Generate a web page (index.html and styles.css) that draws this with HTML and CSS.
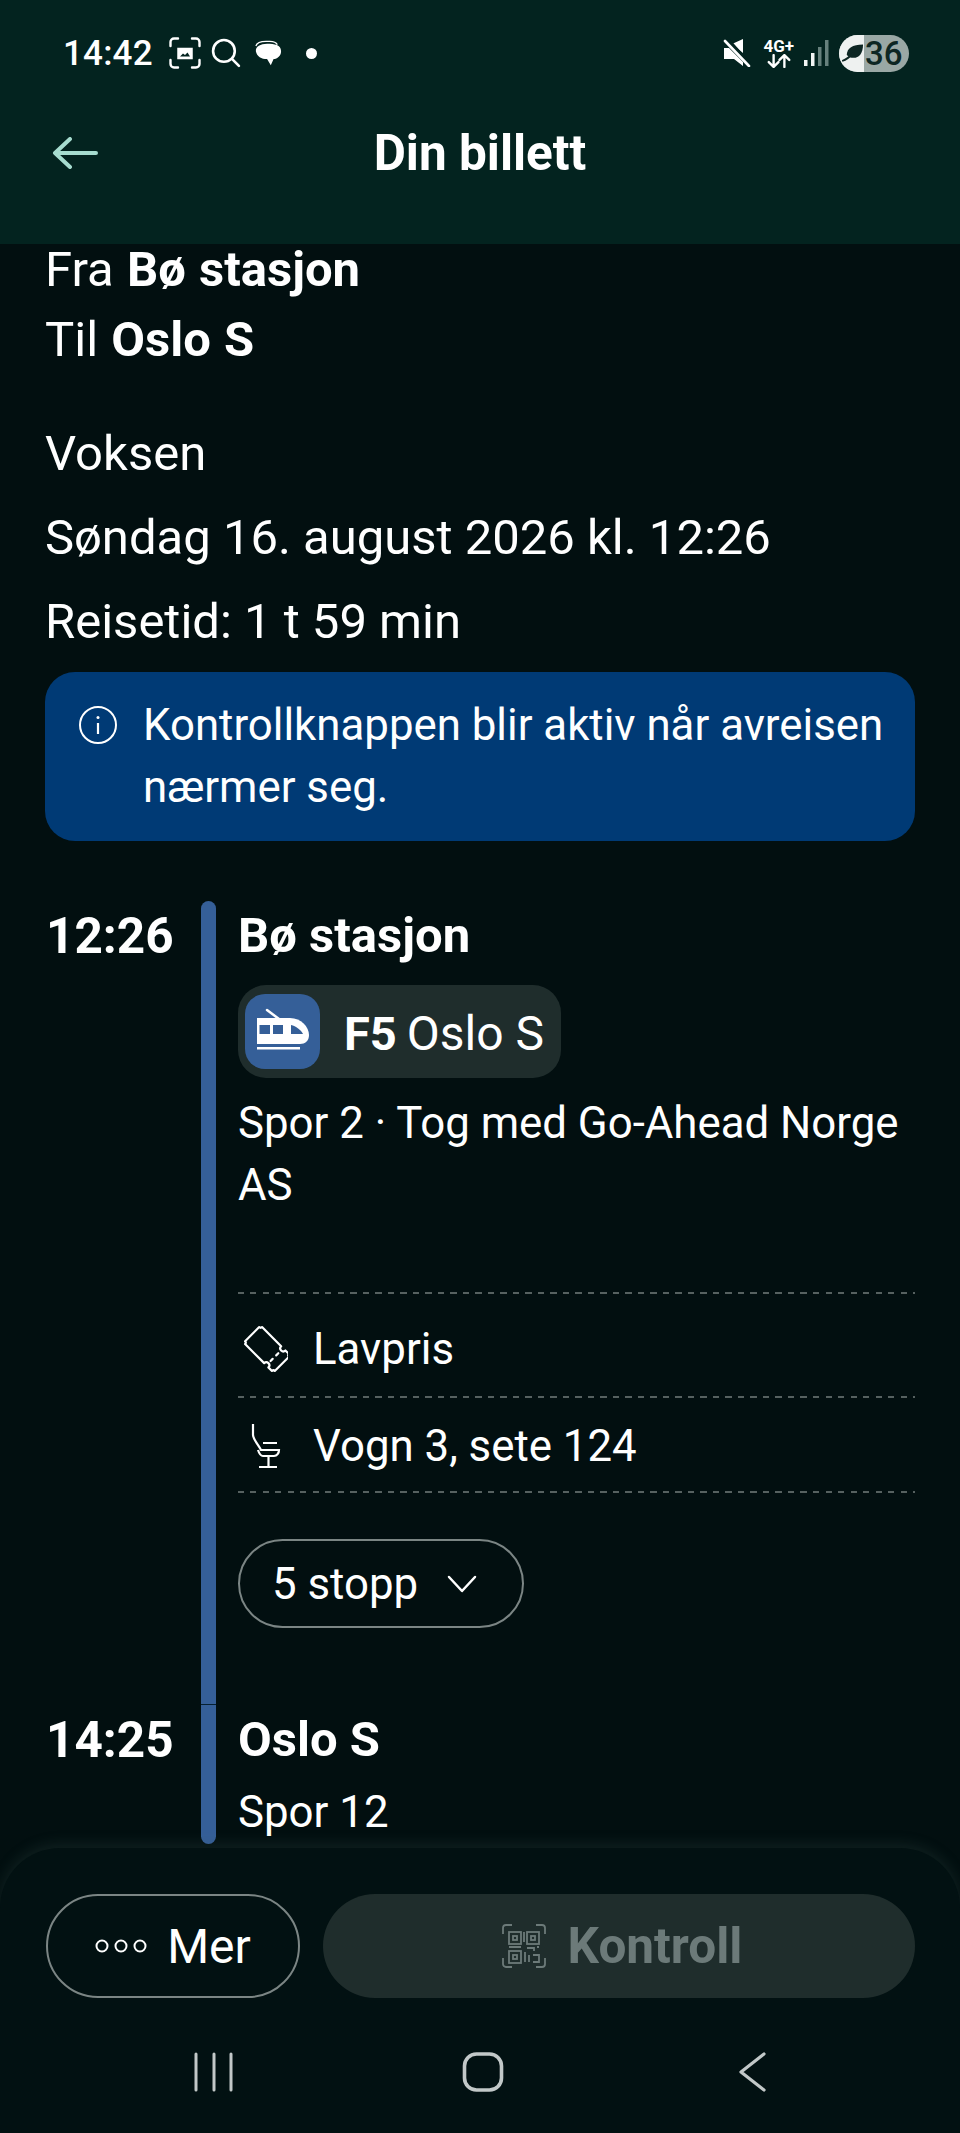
FILE: index.html
```html
<!DOCTYPE html>
<html lang="en">
<head>
    <meta charset="UTF-8">
    <meta name="viewport" content="width=device-width, initial-scale=1.0">
    <title>Din billett</title>
    <link rel="stylesheet" href="styles.css">
</head>
<body>
    <div class="app">
        <header class="top">
            <div class="status-bar">
                <div class="status-left">
                    <span class="clock">14:42</span>
                    <svg class="ico-shot" width="32" height="32" viewBox="0 0 32 32" fill="none" stroke="currentColor" stroke-width="2.400" stroke-linecap="round">
                        <path d="M1.500 9V5a3.500 3.500 0 0 1 3.500-3.500h4M23 1.500h4A3.500 3.500 0 0 1 30.500 5v4M30.500 23v4a3.500 3.500 0 0 1-3.500 3.500h-4M9 30.500H5A3.500 3.500 0 0 1 1.500 27v-4"/>
                        <path d="M9 11.500h14v10H9z" fill="currentColor" stroke-width="1.500"/>
                        <path d="M11 19.500l3-3 2 1.500 2.500-2.500 2.500 4z" fill="#03231f" stroke="none"/>
                    </svg>
                    <svg class="ico-search" width="30" height="30" viewBox="0 0 29 29" fill="none" stroke="currentColor" stroke-width="2.500" stroke-linecap="round">
                        <circle cx="12.500" cy="12.500" r="10.500"/>
                        <path d="M20.500 20.500l6.500 6.500"/>
                    </svg>
                    <svg class="ico-chat" width="28" height="27" viewBox="0 0 30 28" fill="currentColor">
                        <path d="M2 6C3 2.500 7 1 13 1h4c4 0 7 1.500 8 3.500" fill="none" stroke="currentColor" stroke-width="1.300"/>
                        <path d="M14 3.500c8 0 15 1 15 8 0 5-4 8-8 8.500l-3 6.500-4-6.500c-6 0-11-3-12-8.500C1.500 6.500 7 3.500 14 3.500z"/>
                    </svg>
                    <span class="dot"></span>
                </div>
                <div class="status-right">
                    <svg class="ico-mute" width="28" height="28" viewBox="0 0 28 28" fill="currentColor">
                        <path d="M20 0v14L9 5zM1 9h5l14 14v4l-9-7H1z"/>
                        <path d="M4 0l23 26" stroke="#03231f" stroke-width="4" fill="none"/>
                        <path d="M2 2l24 25" stroke="currentColor" stroke-width="2.600" fill="none" stroke-linecap="round"/>
                    </svg>
                    <div class="net">
                        <span class="net-label">4G+</span>
                        <svg width="24" height="14" viewBox="0 0 22 13" fill="none" stroke="currentColor" stroke-width="2.200" stroke-linecap="round" stroke-linejoin="round">
                            <path d="M6 1v11M1.500 7.500L6 12l4.500-4.500M16 12V1M11.500 5.500L16 1l4.500 4.500"/>
                        </svg>
                    </div>
                    <svg class="ico-signal" width="25" height="27" viewBox="0 0 25 27">
                        <rect x="0" y="20" width="3.500" height="6" fill="#f2f5f4"/>
                        <rect x="7" y="13" width="3.500" height="13" fill="#f2f5f4"/>
                        <rect x="14" y="7" width="3.500" height="19" fill="#66807c"/>
                        <rect x="21" y="0" width="3.500" height="26" fill="#66807c"/>
                    </svg>
                    <div class="battery">
                        <div class="battery-fill">
                            <svg width="23" height="20" viewBox="0 0 23 20" fill="none" stroke="#0d2623" stroke-linecap="round">
                                <path d="M5 12C5 5 11 1 22 1c0 9-4 14-10 14-3 0-5-1-7-3z" fill="#0d2623" stroke="none"/>
                                <path d="M1 18c4-1 7-4 11-8" stroke-width="2"/>
                            </svg>
                        </div>
                        <span class="battery-level">36</span>
                    </div>
                </div>
            </div>
            <div class="toolbar">
                <svg class="back-arrow" width="46" height="32" viewBox="0 0 46 32" fill="none" stroke="currentColor" stroke-width="4" stroke-linecap="round" stroke-linejoin="round">
                    <path d="M44 16H3M18 2L3 16l15 14"/>
                </svg>
                <h1>Din billett</h1>
            </div>
        </header>

        <main class="content">
            <div class="route">
                <p>Fra <b>Bø stasjon</b></p>
                <p>Til <b>Oslo S</b></p>
            </div>
            <div class="trip-info">
                <p>Voksen</p>
                <p>Søndag 16. august 2026 kl. 12:26</p>
                <p>Reisetid: 1 t 59 min</p>
            </div>
            <div class="notice">
                <svg width="38" height="38" viewBox="0 0 38 38" fill="none" stroke="currentColor" stroke-width="2">
                    <circle cx="19" cy="19" r="18"/>
                    <path d="M19 17v11" stroke-width="2.200"/>
                    <circle cx="19" cy="11.500" r="1.500" fill="currentColor" stroke="none"/>
                </svg>
                <p>Kontrollknappen blir aktiv når avreisen nærmer seg.</p>
            </div>

            <div class="timeline">
                <div class="leg leg-first">
                    <div class="time">12:26</div>
                    <div class="line line-top"></div>
                    <div class="leg-body">
                        <div class="station">Bø stasjon</div>
                        <div class="line-chip">
                            <div class="train-tile">
                                <svg width="75" height="75" viewBox="0 0 75 75">
                                    <path d="M22 16l12 9" stroke="#fff" stroke-width="2.500" stroke-linecap="round"/>
                                    <path d="M12 24h33c11 0 19 9 19 17 0 6-4 9-9 9H12z" fill="#fff"/>
                                    <path d="M14.500 31H25v9H14.500zM28 31h10v9H28z" fill="#355f98"/>
                                    <path d="M46 31c5 1 10 5 12 9H46z" fill="#355f98"/>
                                    <rect x="12" y="53" width="43" height="2.500" fill="#fff"/>
                                </svg>
                            </div>
                            <b class="chip-code">F5</b>
                            <span class="chip-dest">Oslo S</span>
                        </div>
                        <p class="platform">Spor 2 · Tog med Go-Ahead Norge AS</p>
                        <div class="extras">
                            <div class="extra extra-price">
                                <svg width="50" height="50" viewBox="-29 -25 50 50" fill="none" stroke="currentColor" stroke-width="2.200" stroke-linejoin="round">
                                    <g transform="rotate(45)">
                                        <path d="M-19-12H8a3 3 0 0 0 6 0H19a2 2 0 0 0 2 2V10a2 2 0 0 0-2 2H14a3 3 0 0 0-6 0H-19a2 2 0 0 0-2-2V-10a2 2 0 0 0 2-2z"/>
                                        <path d="M11-5v3M11 3v3" stroke-linecap="round"/>
                                    </g>
                                </svg>
                                <span>Lavpris</span>
                            </div>
                            <div class="extra extra-seat">
                                <svg width="50" height="46" viewBox="-11 0 50 46" fill="none" stroke="currentColor" stroke-width="2.200">
                                    <path d="M4 1v11c0 4 6 11 8 15h18c0 3-2 6-5 6H14c-2 0-4-3-5-6"/>
                                    <path d="M14 20h14M19.500 33v10M10 44h18"/>
                                </svg>
                                <span>Vogn 3, sete 124</span>
                            </div>
                        </div>
                        <button class="stops-btn">
                            5 stopp
                            <svg width="30" height="18" viewBox="0 0 30 18" fill="none" stroke="currentColor" stroke-width="2.500" stroke-linecap="round" stroke-linejoin="round">
                                <path d="M2 2l13 14L28 2"/>
                            </svg>
                        </button>
                    </div>
                </div>
                <div class="leg leg-last">
                    <div class="time">14:25</div>
                    <div class="line line-bottom"></div>
                    <div class="leg-body">
                        <div class="station">Oslo S</div>
                        <p class="platform">Spor 12</p>
                    </div>
                </div>
            </div>
        </main>

        <footer class="bottom">
            <div class="actions">
                <button class="more-btn">
                    <svg width="52" height="14" viewBox="0 0 52 14" fill="none" stroke="currentColor" stroke-width="2">
                        <circle cx="7" cy="7" r="5.500"/>
                        <circle cx="26" cy="7" r="5.500"/>
                        <circle cx="45" cy="7" r="5.500"/>
                    </svg>
                    Mer
                </button>
                <button class="control-btn">
                    <svg width="44" height="44" viewBox="0 0 44 44" fill="none" stroke="currentColor" stroke-width="1.800">
                        <path d="M1 10V4a3 3 0 0 1 3-3h6M34 1h6a3 3 0 0 1 3 3v6M43 34v6a3 3 0 0 1-3 3h-6M10 43H4a3 3 0 0 1-3-3v-6"/>
                        <rect x="7" y="8" width="12" height="12"/>
                        <rect x="11" y="12" width="4" height="4"/>
                        <rect x="25" y="8" width="12" height="12"/>
                        <rect x="29" y="12" width="4" height="4"/>
                        <rect x="7" y="27" width="12" height="12"/>
                        <rect x="11" y="31" width="4" height="4"/>
                        <path d="M7 23h12M22 8v10M25 24h7v3M35 23h2M23 28v10M27 31v7M31 31h6v7h-6"/>
                    </svg>
                    Kontroll
                </button>
            </div>
            <nav class="nav-bar">
                <svg width="48" height="40" viewBox="0 0 48 40" fill="none" stroke="currentColor" stroke-width="3" stroke-linecap="round">
                    <path d="M6 2v36M24 2v36M41 2v36"/>
                </svg>
                <svg width="48" height="40" viewBox="0 0 48 40" fill="none" stroke="currentColor" stroke-width="3.600">
                    <rect x="5.500" y="2" width="37" height="36" rx="12"/>
                </svg>
                <svg width="48" height="40" viewBox="0 0 48 40" fill="none" stroke="currentColor" stroke-width="3.200" stroke-linecap="round" stroke-linejoin="round">
                    <path d="M36 2L13 20l23 18"/>
                </svg>
            </nav>
        </footer>
    </div>
</body>
</html>
```

FILE: styles.css
```css
* {
    box-sizing: border-box;
}
body {
    margin: 0;
    padding: 0;
    background-color: #020f10;
    color: #fff;
    font-family: Roboto, "Liberation Sans", sans-serif;
    font-size: 43.800px;
}
p, h1 {
    margin: 0;
}
button {
    font-family: inherit;
    color: inherit;
}
.app {
    display: flex;
    flex-direction: column;
    height: 2133px;
    overflow: hidden;
}

/* status bar + title */
.top {
    flex: none;
    height: 244px;
    background-color: #03231f;
}
.status-bar {
    display: flex;
    justify-content: space-between;
    align-items: center;
    height: 106px;
    padding: 0 51px 0 63px;
}
.status-left, .status-right {
    display: flex;
    align-items: center;
}
.clock {
    font-size: 35px;
    font-weight: 500;
    letter-spacing: 0.2px;
    margin-right: 16px;
}
.ico-search {
    margin-left: 10px;
}
.ico-chat {
    margin-left: 13px;
}
.dot {
    width: 11px;
    height: 11px;
    margin-left: 24px;
    border-radius: 50%;
    background: #fff;
}
.net {
    display: flex;
    flex-direction: column;
    align-items: center;
    margin-left: 12px;
}
.net-label {
    font-size: 17px;
    font-weight: 700;
    line-height: 16px;
}
.ico-signal {
    margin-left: 10px;
}
.battery {
    display: flex;
    width: 70px;
    height: 37px;
    margin-left: 10px;
    border-radius: 19px;
    overflow: hidden;
    background: #9aa8a5;
    color: #0d2623;
}
.battery-fill {
    display: flex;
    align-items: center;
    justify-content: center;
    width: 25px;
    padding-left: 3px;
    background: #eef1f0;
}
.battery-level {
    font-size: 33px;
    font-weight: 500;
    line-height: 37px;
    margin-left: 1px;
}
.toolbar {
    display: flex;
    align-items: center;
    justify-content: center;
    position: relative;
    height: 94px;
}
.toolbar h1 {
    font-size: 49.500px;
    font-weight: 700;
}
.back-arrow {
    position: absolute;
    left: 52px;
    top: 31px;
    color: #a6dccf;
}

/* scrolling part */
.content {
    flex: 1;
    min-height: 0;
    padding: 0 45px;
}
.route p, .trip-info p {
    font-size: 49px;
    line-height: 52px;
}
.route p {
    word-spacing: 1px;
}
.route p + p {
    margin-top: 18px;
}
.trip-info {
    margin-top: 62px;
}
.trip-info p + p {
    margin-top: 32px;
}
.notice {
    display: flex;
    gap: 26px;
    margin-top: 24px;
    padding: 22px 24px 23px 34px;
    border-radius: 30px;
    background-color: #003a75;
    line-height: 62px;
}
.notice svg {
    flex: none;
    margin-top: 12px;
}

/* journey */
.timeline {
    margin-top: 60px;
}
.leg {
    display: grid;
    grid-template-columns: 156px 15px 1fr;
}
.time, .station {
    font-size: 49px;
    font-weight: 700;
    line-height: 70px;
}
.time {
    font-size: 49.500px;
    padding-left: 1px;
}
.line {
    background-color: #355f98;
}
.line-top {
    border-radius: 8px 8px 0 0;
}
.line-bottom {
    border-top: 1px solid #062030;
    border-radius: 0 0 8px 8px;
}
.leg-body {
    padding-left: 22px;
}
.leg-first .leg-body {
    padding-bottom: 76px;
}
.leg-last .leg-body {
    padding: 1px 0 1px 22px;
}
.leg-last .time {
    padding-top: 1px;
}
.line-chip {
    display: inline-flex;
    align-items: center;
    height: 93px;
    margin-top: 14px;
    padding: 0 17px 0 7px;
    border-radius: 28px;
    background-color: #1f2d2c;
    font-size: 48px;
    vertical-align: top;
}
.train-tile {
    display: flex;
    width: 75px;
    height: 75px;
    margin-right: 24px;
    border-radius: 20px;
    background-color: #355f98;
}
.chip-code {
    padding-top: 3px;
    font-size: 47px;
    font-weight: 700;
}
.chip-dest {
    padding-top: 3px;
    margin-left: 10px;
}
.platform {
    margin-top: 14px;
    line-height: 62px;
}
.leg-last .platform {
    margin-top: 6px;
}
.extras {
    margin-top: 76px;
    padding-top: 2px;
    background: repeating-linear-gradient(90deg, #566160 0 6px, transparent 6px 12.500px) top left / 100% 2px no-repeat;
}
.extra {
    display: flex;
    align-items: center;
    gap: 25px;
    background: repeating-linear-gradient(90deg, #566160 0 6px, transparent 6px 12.500px) bottom left / 100% 2px no-repeat;
}
.extra svg {
    flex: none;
}
.extra-price {
    height: 104px;
    padding-top: 5px;
}
.extra-seat {
    height: 95px;
}
.stops-btn {
    display: flex;
    align-items: center;
    gap: 29px;
    width: 286px;
    height: 89px;
    margin-top: 46px;
    padding: 0 0 0 32px;
    border: 2px solid #7b8584;
    border-radius: 45px;
    background: none;
    font-size: 43.800px;
}

/* bottom sheet */
.bottom {
    flex: none;
    height: 285px;
    border-radius: 60px 60px 0 0;
    background-color: #021112;
    box-shadow: 0 -4px 14px rgba(70, 95, 90, 0.22);
}
.actions {
    display: flex;
    gap: 23px;
    padding: 46px 45px 0 46px;
}
.more-btn, .control-btn {
    display: flex;
    align-items: center;
    justify-content: center;
    height: 104px;
    border-radius: 52px;
}
.more-btn {
    flex: none;
    gap: 20px;
    width: 254px;
    border: 2px solid #7b8584;
    background: none;
    font-size: 48px;
}
.control-btn {
    flex: 1;
    gap: 22px;
    padding-left: 12px;
    border: none;
    background-color: #1f2d2c;
    color: #6c7a79;
    font-size: 49.500px;
    font-weight: 700;
}
.nav-bar {
    display: flex;
    justify-content: space-between;
    margin-top: 54px;
    padding: 0 184px 0 190px;
    color: #c2c8c8;
}
```
